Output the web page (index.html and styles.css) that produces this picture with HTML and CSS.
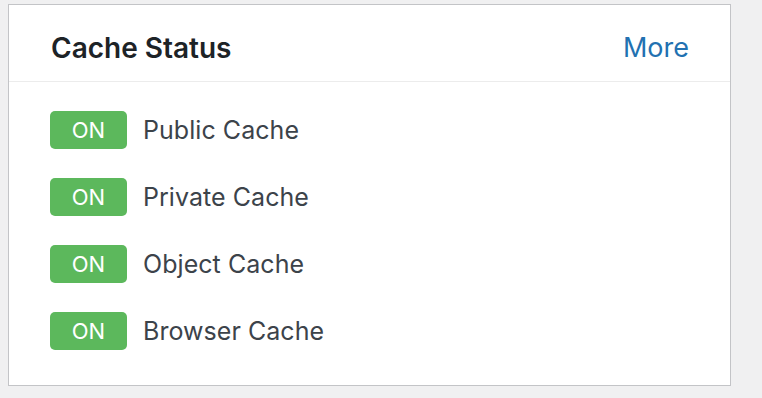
FILE: index.html
```html
<!DOCTYPE html>
<html lang="en">
<head>
    <meta charset="UTF-8">
    <meta name="viewport" content="width=device-width, initial-scale=1.0">
    <title>Cache Status</title>
    <link rel="stylesheet" href="styles.css">
</head>
<body>
    <div class="card">
        <div class="card-header">
            <h2>Cache Status</h2>
            <a href="#" class="more">More</a>
        </div>
        <div class="card-body">
            <div class="status-row"><span class="badge">ON</span> Public Cache</div>
            <div class="status-row"><span class="badge">ON</span> Private Cache</div>
            <div class="status-row"><span class="badge">ON</span> Object Cache</div>
            <div class="status-row"><span class="badge">ON</span> Browser Cache</div>
        </div>
    </div>
</body>
</html>
```

FILE: styles.css
```css
* {
    box-sizing: border-box;
    margin: 0;
    padding: 0;
}
body {
    font-family: 'Inter', 'Noto Sans', sans-serif;
    background: #f0f0f1;
    padding: 4px 0 0 8px;
}
.card {
    width: 723px;
    height: 382px;
    background: #fff;
    border: 1px solid #c3c4c7;
}
.card-header {
    display: flex;
    justify-content: space-between;
    align-items: center;
    height: 77px;
    padding: 9px 41px 0 42px;
    border-bottom: 1px solid #ececec;
}
.card-header h2 {
    font-size: 28px;
    font-weight: 600;
    color: #1d2327;
}
.more {
    font-size: 27px;
    color: #2271b1;
    text-decoration: none;
}
.card-body {
    display: flex;
    flex-direction: column;
    gap: 29px;
    padding: 29px 41px;
}
.status-row {
    display: flex;
    align-items: center;
    gap: 16px;
    font-size: 25px;
    letter-spacing: 0.05px;
    color: #3c434a;
}
.badge {
    display: flex;
    align-items: center;
    justify-content: center;
    width: 77px;
    height: 38px;
    background: #5cb85c;
    color: #fff;
    font-size: 22px;
    letter-spacing: 0;
    border-radius: 5px;
}
```
